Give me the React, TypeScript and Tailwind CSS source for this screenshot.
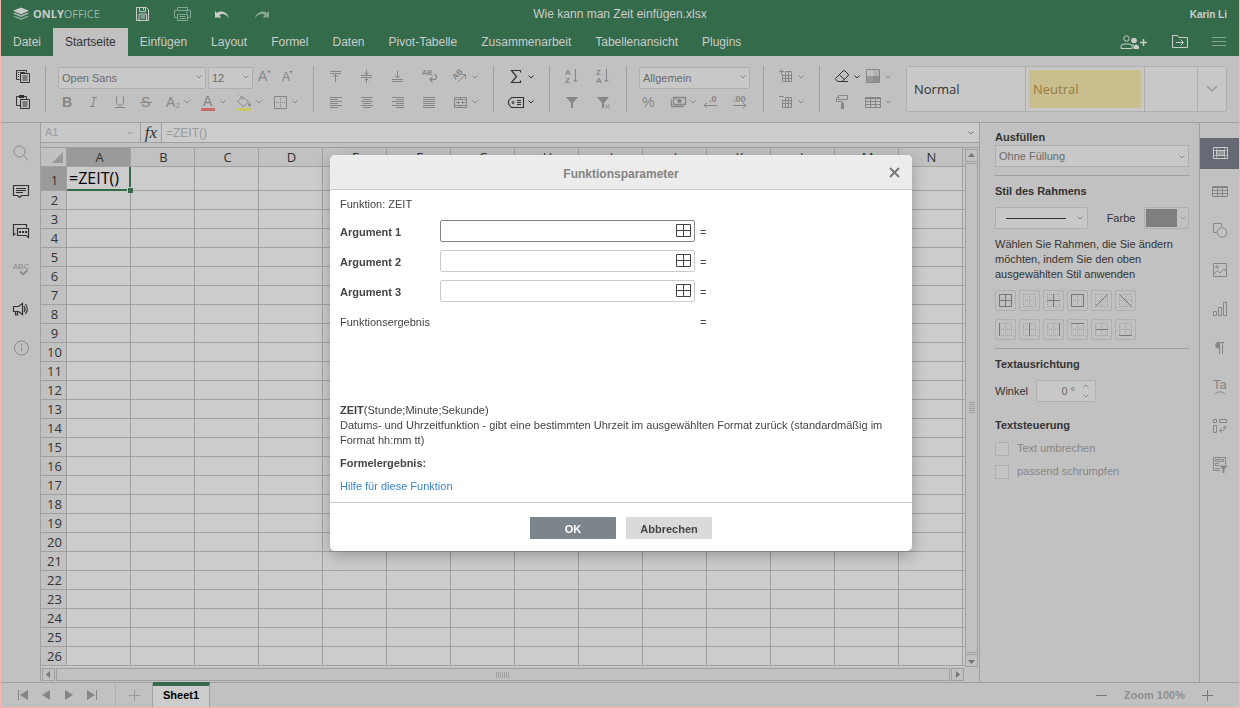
import { useState } from "react";
import type { ReactNode } from "react";
import clsx from "clsx";

const columns = ["A", "B", "C", "D", "E", "F", "G", "H", "I", "J", "K", "L", "M", "N"];
const rows = Array.from({ length: 26 }, (_, i) => i + 1);
const menuTabs = [
  "Datei",
  "Startseite",
  "Einfügen",
  "Layout",
  "Formel",
  "Daten",
  "Pivot-Tabelle",
  "Zusammenarbeit",
  "Tabellenansicht",
  "Plugins",
];

// Base 20x20 icon, stroke follows the text colour
const Icon = ({ children }: { children: ReactNode }) => (
  <svg width="20" height="20" viewBox="0 0 20 20" fill="none" stroke="currentColor" className="block shrink-0">
    {children}
  </svg>
);

const Chevron = () => (
  <svg width="6" height="4" viewBox="0 0 6 4" fill="none" stroke="currentColor" className="block shrink-0">
    <path d="M.5 .5l2.500 2.500l2.500-2.500" />
  </svg>
);

const ToolButton = ({ label, children, caret, dark }: { label: string; children: ReactNode; caret?: boolean; dark?: boolean }) => (
  <div className={clsx("flex h-5 shrink-0 items-center", dark ? "text-[#333333]" : "text-[#868686]")}>
    <button type="button" aria-label={label} className="h-5 w-5">
      <Icon>{children}</Icon>
    </button>
    {caret && (
      <button type="button" aria-label={`${label} Optionen`} className="flex h-5 w-[10px] items-center justify-center">
        <Chevron />
      </button>
    )}
  </div>
);

const ToolGroup = ({ children }: { children: ReactNode }) => <div className="flex shrink-0 flex-col gap-1">{children}</div>;

const Row = ({ children, className }: { children: ReactNode; className?: string }) => (
  <div className={clsx("flex items-center first:h-[22px]", className)}>{children}</div>
);

const Separator = () => <div className="mr-3 ml-[13px] w-px shrink-0 self-stretch bg-[#a0a0a0]" />;

const Combo = ({ label, value, className }: { label: string; value: string; className: string }) => (
  <div className={clsx("relative shrink-0 text-[#868686]", className)}>
    <select
      aria-label={label}
      className="h-[22px] w-full appearance-none rounded-[1px] border border-[#afafaf] bg-[#c8c8c8] pr-4 pl-[3px] text-[11px] text-[#6a6a6a]"
    >
      <option>{value}</option>
    </select>
    <span className="pointer-events-none absolute top-[10px] right-1">
      <Chevron />
    </span>
  </div>
);

const Letter = ({ children, x, y = 15, size = 14, weight }: { children: string; x: number; y?: number; size?: number; weight?: string }) => (
  <text x={x} y={y} fontSize={size} fontWeight={weight} fill="currentColor" stroke="none" fontFamily="Liberation Sans, sans-serif">
    {children}
  </text>
);

const Logo = () => (
  <div className="flex items-center gap-1 text-[#cccccc]">
    <svg width="16" height="14" viewBox="0 0 17 14" fill="currentColor">
      <path d="M8.500 0L17 3.500L8.500 7.200L0 3.500z" />
      <path d="M0 6.500l2-.9l6.500 2.800l6.500-2.800l2 .9l-8.500 3.700z" opacity=".8" />
      <path d="M0 9.700l2-.9l6.500 2.800l6.500-2.800l2 .9l-8.500 3.800z" opacity=".55" />
    </svg>
    <span className="font-['Open_Sans',sans-serif] text-[11px] leading-[14px]">
      <b>ONLY</b>
      <span className="text-[#9cb8a8]">OFFICE</span>
    </span>
  </div>
);

const TitleBar = () => (
  <div className="grid h-7 grid-cols-[1fr_auto_1fr] items-center pr-3 pl-3 text-[#cccccc]">
    <div className="flex items-center">
      <Logo />
      <div className="ml-8 flex gap-[20px]">
        <button type="button" aria-label="Speichern">
          <Icon>
            <path d="M4.500 3.500h10l2 2v11h-12zM7.500 3.500v4h6v-4M11.500 4v2M7 16v-6h7.500v6M8.500 12h4.500M8.500 14h4.500" />
          </Icon>
        </button>
        <button type="button" aria-label="Drucken" className="text-[#84a692]">
          <Icon>
            <path d="M5.500 6.500V3.500h10v3M5.500 13.500h-3v-7h16v7h-3M5.500 10.500h10v6h-10zM7.500 12.500h6M7.500 14.500h6M14 8.500h2" />
          </Icon>
        </button>
        <button type="button" aria-label="Rückgängig">
          <Icon>
            <path d="M3 7v6.500h6.500L7.300 11.300C9.500 9.300 13.500 9.500 17 14C15.500 8 9 5.800 5 9z" fill="currentColor" stroke="none" />
          </Icon>
        </button>
        <button type="button" aria-label="Wiederholen" className="text-[#84a692]">
          <Icon>
            <path d="M17 7v6.500h-6.500l2.200-2.200C10.500 9.300 6.500 9.500 3 14C4.500 8 11 5.800 15 9z" fill="currentColor" stroke="none" />
          </Icon>
        </button>
      </div>
    </div>
    <h1 className="text-[12px]">Wie kann man Zeit einfügen.xlsx</h1>
    <span className="justify-self-end text-[10px] font-bold">Karin Li</span>
  </div>
);

const MenuBar = ({ active, onChange }: { active: string; onChange: (tab: string) => void }) => (
  <nav className="flex h-7 items-stretch text-[12px] text-[#cccccc]">
    {menuTabs.map((tab) => (
      <button
        key={tab}
        type="button"
        onClick={() => onChange(tab)}
        className={clsx("px-3", tab === active && "bg-[#c1c1c1] text-[#333333]")}
      >
        {tab}
      </button>
    ))}
    <div className="ml-auto flex items-center gap-[24px] pr-[13px]">
      <button type="button" aria-label="Benutzer verwalten">
        <svg width="28" height="16" viewBox="0 0 28 16" fill="none" stroke="currentColor" className="block">
          <circle cx="6.500" cy="4.500" r="2.700" />
          <path d="M1 14.500v-2q0-2.500 3-2.500h5q3 0 3 2.500v2z" />
          <path d="M23.500 5v7M20 8.500h7" strokeWidth="1.500" />
          <circle cx="14" cy="6.500" r="2.800" fill="currentColor" stroke="none" />
          <path d="M13.500 15v-2.500l-1.500-2h1.500l1 1l1-1q3.500 0 3.500 2.500v2z" fill="currentColor" stroke="none" />
        </svg>
      </button>
      <button type="button" aria-label="Speicherort öffnen">
        <svg width="16" height="14" viewBox="0 0 16 14" fill="none" stroke="currentColor" className="block">
          <path d="M.5 12.500V.5h5l1.500 2h8.500v10zM4 7.500h7M8.500 4.500l3 3l-3 3" />
        </svg>
      </button>
      <button type="button" aria-label="Ansicht" className="text-[#84a692]">
        <svg width="14" height="10" viewBox="0 0 14 10" stroke="currentColor" className="block">
          <path d="M0 .5h14M0 4.500h14M0 8.500h14" />
        </svg>
      </button>
    </div>
  </nav>
);

const Toolbar = () => (
  <div className="flex border-b border-[#a0a0a0] bg-[#c1c1c1] pt-[10px] pr-3 pb-[10px] pl-[11px]">
    <ToolGroup>
      <Row>
        <ToolButton label="Kopieren" dark>
          <path d="M7.500 12.500h-3v-9h10v2M8.500 6.500h9v9h-9zM10.500 9h5M10.500 11h5M10.500 13h5M6 5.500h1M8 5.500h5M6 7.500h1M6 9.500h1" />
        </ToolButton>
      </Row>
      <Row>
        <ToolButton label="Einfügen" dark>
          <path d="M8.500 13.500h-4v-9h10v3M8.500 7.500h9v9h-9zM10.500 10h5M10.500 12h5M10.500 14h5" />
          <path d="M7 3h5v3H7z" fill="currentColor" stroke="none" />
        </ToolButton>
      </Row>
    </ToolGroup>
    <Separator />
    <ToolGroup>
      <Row>
        <Combo label="Schriftart" value="Open Sans" className="mr-[2px] w-[148px]" />
        <Combo label="Schriftgröße" value="12" className="mr-[5px] w-[45px]" />
        <ToolButton label="Schrift vergrößern">
          <Letter x={0} y={14} size={14}>A</Letter>
          <path d="M9 5.500l2-2.500L13 5.500z" fill="currentColor" stroke="none" />
        </ToolButton>
        <ToolButton label="Schrift verkleinern">
          <Letter x={4} y={14} size={12}>A</Letter>
          <path d="M11 4l2 2.500L15 4z" fill="currentColor" stroke="none" />
        </ToolButton>
      </Row>
      <Row className="gap-[6px]">
        <ToolButton label="Fett">
          <Letter x={4} weight="bold">B</Letter>
        </ToolButton>
        <ToolButton label="Kursiv">
          <path d="M8 5.500h5M6 14.500h5M10.500 5.500l-2 9" />
        </ToolButton>
        <ToolButton label="Unterstrichen">
          <path d="M6.500 4.500v5.500q0 3.500 3.500 3.500t3.500-3.500V4.500M5 15.500h10" />
        </ToolButton>
        <ToolButton label="Durchgestrichen">
          <Letter x={5}>S</Letter>
          <path d="M4 10.500h12" />
        </ToolButton>
        <ToolButton label="Tiefgestellt" caret>
          <Letter x={4}>A</Letter>
          <Letter x={14} y={16} size={7}>2</Letter>
        </ToolButton>
        <ToolButton label="Schriftfarbe" caret>
          <Letter x={5} y={14}>A</Letter>
          <path d="M3 16h14v3H3z" fill="#cc6b6b" stroke="none" />
        </ToolButton>
        <ToolButton label="Hintergrundfarbe" caret>
          <path d="M3.500 9.500l5.500-5l5.500 5.500l-5 4.500zM5.500 3.500l4 4" />
          <path d="M15.500 10l1.500 3.500q-1.500 2-3 0z" fill="currentColor" stroke="none" />
          <path d="M3 16h14v3H3z" fill="#cbc767" stroke="none" />
        </ToolButton>
        <ToolButton label="Rahmen" caret>
          <path d="M4.500 4.500h12v12h-12z" />
          <path d="M6 10.500h9M10.500 6v9" strokeDasharray="1 1" />
        </ToolButton>
      </Row>
    </ToolGroup>
    <Separator />
    <ToolGroup>
      <Row className="gap-[11px]">
        <ToolButton label="Oben ausrichten">
          <path d="M4 4.500h11M4 6.500h11M9.500 8v7M7 10l2.500-2.500L12 10" />
        </ToolButton>
        <ToolButton label="Mittig ausrichten">
          <path d="M4 8.500h11M4 10.500h11M9.500 3v5M7.500 5.500l2 2l2-2M9.500 16v-5M7.500 13.500l2-2l2 2" />
        </ToolButton>
        <ToolButton label="Unten ausrichten">
          <path d="M4 14.500h11M4 12.500h11M9.500 4v7M7 8.500l2.500 2.500L12 8.500" />
        </ToolButton>
        <ToolButton label="Text umbrechen">
          <Letter x={3} y={8} size={7} weight="bold">AB</Letter>
          <path d="M11 12.500h4q2.500 0 2.500-2.500t-2.500-2.500M13.500 10l-2.500 2.500l2.500 2.500" strokeWidth="1.200" />
        </ToolButton>
        <ToolButton label="Ausrichtung" caret>
          <g transform="rotate(-45 8 9)">
            <Letter x={3} y={10} size={8} weight="bold">AB</Letter>
          </g>
          <path d="M8 15l7-7M11.500 7.500H15.500v4" />
        </ToolButton>
      </Row>
      <Row className="gap-[11px]">
        <ToolButton label="Linksbündig">
          <path d="M4 5.500h12M4 7.500h8M4 9.500h12M4 11.500h8M4 13.500h12M4 15.500h8" />
        </ToolButton>
        <ToolButton label="Zentriert">
          <path d="M4 5.500h12M6 7.500h8M4 9.500h12M6 11.500h8M4 13.500h12M6 15.500h8" />
        </ToolButton>
        <ToolButton label="Rechtsbündig">
          <path d="M4 5.500h12M8 7.500h8M4 9.500h12M8 11.500h8M4 13.500h12M8 15.500h8" />
        </ToolButton>
        <ToolButton label="Blocksatz">
          <path d="M4 5.500h12M4 7.500h12M4 9.500h12M4 11.500h12M4 13.500h12M4 15.500h12" />
        </ToolButton>
        <ToolButton label="Zellen verbinden" caret>
          <path d="M4.500 5.500h12v10h-12zM4 7.500h13M4 13.500h13M10.500 5v3M10.500 13v3M6 10.500h3M12 10.500h3M8 9l1.500 1.500L8 12M13 9l-1.500 1.500L13 12" />
        </ToolButton>
      </Row>
    </ToolGroup>
    <Separator />
    <ToolGroup>
      <Row>
        <ToolButton label="Summe" caret dark>
          <path d="M14.500 5.500V3.500h-9l5 6l-5 6h9v-2" strokeWidth="1.200" />
        </ToolButton>
      </Row>
      <Row>
        <ToolButton label="Benannte Bereiche" caret dark>
          <path d="M5.500 5.500h12v10h-12L2.500 12V9zM11 8.500h4M11 10.500h4M11 12.500h4" strokeWidth="1.100" />
          <circle cx="7" cy="10.500" r="1" />
        </ToolButton>
      </Row>
    </ToolGroup>
    <Separator />
    <ToolGroup>
      <Row className="gap-[11px]">
        <ToolButton label="Aufsteigend sortieren">
          <Letter x={3} y={8} size={8} weight="bold">A</Letter>
          <Letter x={3} y={16} size={8} weight="bold">Z</Letter>
          <path d="M13.500 2v13M11 12.500l2.500 2.500l2.500-2.500" />
        </ToolButton>
        <ToolButton label="Absteigend sortieren">
          <Letter x={3} y={8} size={8} weight="bold">Z</Letter>
          <Letter x={3} y={16} size={8} weight="bold">A</Letter>
          <path d="M13.500 2v13M11 12.500l2.500 2.500l2.500-2.500" />
        </ToolButton>
      </Row>
      <Row className="gap-[11px]">
        <ToolButton label="Filter">
          <path d="M4 5h12l-5 6v5H9v-5z" fill="currentColor" stroke="none" />
        </ToolButton>
        <ToolButton label="Filter löschen">
          <path d="M4 5h12l-5 6v5H9v-5z" fill="currentColor" stroke="none" />
          <path d="M12.500 12.500l4 4M16.500 12.500l-4 4" />
        </ToolButton>
      </Row>
    </ToolGroup>
    <Separator />
    <ToolGroup>
      <Row>
        <Combo label="Zahlenformat" value="Allgemein" className="w-[111px]" />
      </Row>
      <Row className="gap-[9px]">
        <ToolButton label="Prozent">
          <Letter x={3}>%</Letter>
        </ToolButton>
        <div className="flex gap-[2px]">
          <ToolButton label="Währung" caret>
            <path d="M5.500 5.500h12v7h-12zM3.500 7.500v7h12" strokeWidth="1.300" />
            <circle cx="11.500" cy="9" r="1.800" fill="currentColor" />
            <path d="M6 6h2v2M17 6v1" />
          </ToolButton>
          <ToolButton label="Dezimalstelle löschen">
            <Letter x={9} y={10} size={9} weight="bold">.0</Letter>
            <path d="M4 13.500h13M7 11l-3 2.500l3 2.500" />
          </ToolButton>
        </div>
        <ToolButton label="Dezimalstelle hinzufügen">
          <Letter x={4} y={10} size={9} weight="bold">.00</Letter>
          <path d="M4 13.500h13M14 11l3 2.500l-3 2.500" />
        </ToolButton>
      </Row>
    </ToolGroup>
    <Separator />
    <ToolGroup>
      <Row>
        <ToolButton label="Zellen einfügen" caret>
          <path d="M6.500 7v7.500h9v-10H9M6 8.500h10M6 11.500h10M9.500 4v11M12.500 4v11M3 4.500h5M5.500 2v5" />
        </ToolButton>
      </Row>
      <Row>
        <ToolButton label="Zellen löschen" caret>
          <path d="M6.500 8v7.500h9v-10H9M6 8.500h10M6 11.500h10M9.500 5v11M12.500 5v11M3 4.500h5" />
        </ToolButton>
      </Row>
    </ToolGroup>
    <Separator />
    <ToolGroup>
      <Row className="gap-px">
        <ToolButton label="Löschen" caret dark>
          <path d="M3.500 11.500l7.500-7.500q1-1 2 0l3 3q1 1 0 2l-6 5.500H6l-2.500-2q-.8-.5 0-1zM7.500 8l5 4.500M10 14.500h6" />
        </ToolButton>
        <ToolButton label="Bedingte Formatierung" caret>
          <path d="M4 9h6v6H4z" fill="#9a9a9a" stroke="none" />
          <path d="M10 9h6v6h-6z" fill="#8e8e8e" stroke="none" />
          <path d="M10 3h6v6h-6z" fill="#b2b2b2" stroke="none" />
          <path d="M3.500 2.500h13v13h-13z" />
        </ToolButton>
      </Row>
      <Row className="gap-[11px]">
        <ToolButton label="Format übertragen">
          <path d="M6.500 3.500h9v4h-9zM6 5.500H4.500v4h6V12" />
          <path d="M9 11h3v6H9z" fill="currentColor" stroke="none" />
        </ToolButton>
        <ToolButton label="Als Tabelle formatieren" caret>
          <path d="M2.500 5.500h15v10h-15zM2 6.500h16M2 9.500h16M2 12.500h16M7.500 6v10M12.500 6v10" />
        </ToolButton>
      </Row>
    </ToolGroup>
    <div className="ml-[13px] flex h-[46px] min-w-0 flex-1 rounded-[2px] border border-[#afafaf] bg-[#c8c8c8] font-['Open_Sans',sans-serif] text-[13px]">
      <button type="button" className="w-[119px] shrink-0 border-r border-[#afafaf] px-[7px] pt-[2px] text-left text-[#333333]">
        Normal
      </button>
      <div className="flex w-[119px] shrink-0 border-r border-[#afafaf] p-[3px]">
        <button type="button" className="flex-1 bg-[#c9be8e] px-1 pt-[2px] text-left text-[#987a43]">
          Neutral
        </button>
      </div>
      <div className="min-w-0 flex-1" />
      <button type="button" aria-label="Weitere Formatvorlagen" className="flex w-[29px] shrink-0 items-center justify-center border-l border-[#afafaf] text-[#9a9a9a]">
        <svg width="12" height="8" viewBox="0 0 12 8" fill="none" stroke="currentColor" strokeWidth="1.500">
          <path d="M1 1l5 5l5-5" />
        </svg>
      </button>
    </div>
  </div>
);

const SideButton = ({ label, children, active, className }: { label: string; children: ReactNode; active?: boolean; className?: string }) => (
  <button
    type="button"
    aria-label={label}
    className={clsx("flex h-[31px] w-full items-start justify-center pt-[5px] pl-px", active && "bg-[#666a75]", className)}
  >
    <Icon>{children}</Icon>
  </button>
);

const LeftBar = () => (
  <aside className="flex w-10 shrink-0 flex-col gap-2 border-r border-[#a0a0a0] bg-[#c1c1c1] pt-[15px] text-[#333333]">
    <SideButton label="Suchen" className="text-[#8a8a8a]">
      <circle cx="8.500" cy="8.500" r="5.500" />
      <path d="M12.500 12.500l5 5" />
    </SideButton>
    <SideButton label="Kommentare">
      <path d="M2.500 3.500h15v10h-7l-2 2l-2-2h-4zM5 6.500h10M5 8.500h10M5 10.500h7" strokeWidth="1.200" />
    </SideButton>
    <SideButton label="Chat">
      <path d="M4.500 12.500l-2 1.500V3.500h13v3M6.500 7.500h11v9l-2.500-2h-8.500z" strokeWidth="1.200" />
      <path d="M8 10h2v2H8zM11 10h2v2h-2zM14 10h2v2h-2z" fill="currentColor" stroke="none" />
    </SideButton>
    <SideButton label="Rechtschreibprüfung" className="text-[#8a8a8a]">
      <Letter x={2} y={9} size={8}>ABC</Letter>
      <path d="M9 11.500l3 3l4.500-4.500" strokeWidth="1.800" />
    </SideButton>
    <SideButton label="Feedback">
      <path d="M2.500 7.500h5l4-3v11l-4-3h-5zM4.500 13v3h2v-3M13 7q2 3 0 6M14.500 5q3.500 5 0 10" strokeWidth="1.200" />
    </SideButton>
    <SideButton label="Info" className="text-[#8a8a8a]">
      <circle cx="10.500" cy="10" r="7" />
      <path d="M10.500 8.500v5M10.500 5.500v1.500" />
    </SideButton>
  </aside>
);

const RightBar = () => (
  <aside className="flex w-10 shrink-0 flex-col gap-2 border-l border-[#a0a0a0] bg-[#c1c1c1] pt-[15px] text-[#868686]">
    <SideButton label="Zelleneinstellungen" active className="text-[#cccccc]">
      <path d="M3.500 4.500h14v11h-14z" />
      <path d="M3 7.500h15M3 12.500h15M6.500 4v12M14.500 4v12" strokeWidth=".6" />
      <path d="M6.500 7.500h8v5h-8z" fill="#96999f" />
    </SideButton>
    <SideButton label="Tabelleneinstellungen">
      <path d="M2.500 4.500h15v10h-15zM2 5.500h16M2 8.500h16M2 11.500h16M7.500 5v10M12.500 5v10" />
    </SideButton>
    <SideButton label="Formeinstellungen">
      <path d="M6.500 11.500h-3v-9h8v3" />
      <circle cx="12" cy="11.500" r="4.800" />
    </SideButton>
    <SideButton label="Bildeinstellungen">
      <path d="M3.500 3.500h13v13h-13zM4 14l3.500-3.500L10 13l4-4l2.500 3" />
      <circle cx="7" cy="7" r="1.200" />
    </SideButton>
    <SideButton label="Diagrammeinstellungen">
      <path d="M3.500 12.500h3v4h-3zM8.500 8.500h3v8h-3zM13.500 3.500h3v13h-3z" />
    </SideButton>
    <SideButton label="Absatzeinstellungen">
      <path d="M10 4h-1.500a3.200 3.200 0 0 0 0 6.500H10z" fill="currentColor" stroke="none" />
      <path d="M9.500 4v12M12.500 4v12M8 4.500h6" />
    </SideButton>
    <SideButton label="TextArt-Einstellungen">
      <Letter x={3} y={12} size={13}>Ta</Letter>
      <path d="M5 17q5-4.500 10 0" />
    </SideButton>
    <SideButton label="Pivot-Einstellungen">
      <path d="M3.500 3.500h3v3h-3zM9.500 3.500h7v3h-7zM3.500 9.500h3v7h-3zM10 14.500h2.500q2.500 0 2.500-4M11.500 12.500l-2 2l2 2M13 12l2-2l2 2" />
    </SideButton>
    <SideButton label="Datenschnitt-Einstellungen">
      <path d="M10 15.500H3.500v-13h12v7M5.500 4.500h8v2h-8zM9 8.500h-3.500v2h3.500M5 13.500h5" />
      <path d="M9 10.500h9l-3.500 3.500v4h-2v-4z" fill="currentColor" stroke="none" />
    </SideButton>
  </aside>
);

const FormulaBar = () => (
  <div className="flex h-5 border-b border-[#a0a0a0] bg-[#c8c8c8] text-[#9a9a9a]">
    <div className="flex w-[100px] shrink-0 items-center border-r border-[#a0a0a0] pr-[7px]">
      <input aria-label="Namensfeld" defaultValue="A1" className="w-full min-w-0 bg-transparent pl-1 text-[11px] outline-none" />
      <Chevron />
    </div>
    <button
      type="button"
      className="w-[21px] shrink-0 border-r border-[#a0a0a0] font-['Liberation_Serif',serif] text-[17px] leading-[18px] text-[#333333] italic"
    >
      fx
    </button>
    <input aria-label="Formel" defaultValue="=ZEIT()" className="min-w-0 flex-1 bg-[#cccccc] pl-1 text-[12px] outline-none" />
    <button type="button" aria-label="Formelleiste erweitern" className="flex w-4 items-center justify-center bg-[#cccccc] text-[#777777]">
      <Chevron />
    </button>
  </div>
);

const Sheet = () => (
  <div className="min-h-0 min-w-0 flex-1 overflow-hidden bg-[#cccccc]">
    <table className="w-full table-fixed border-separate border-spacing-0 font-['Open_Sans',sans-serif] text-[13px] leading-[18px] text-[#333333]">
      <thead>
        <tr className="h-[19px]">
          <th className="w-[26px] border-r border-b border-[#a0a0a0] bg-[#c1c1c1] p-0" aria-label="Alles auswählen">
            <svg width="11" height="11" viewBox="0 0 11 11" className="ml-[11px] block" fill="#9a9a9a">
              <path d="M11 0v11H0z" />
            </svg>
          </th>
          {columns.map((col) => (
            <th
              key={col}
              className={clsx("w-[64px] border-r border-b border-[#a0a0a0] p-0 pl-[2px] font-normal", col === "A" ? "bg-[#9a9a9a]" : "bg-[#c1c1c1]")}
            >
              {col}
            </th>
          ))}
          <td className="border-b border-[#a0a0a0] bg-[#c1c1c1] p-0" />
        </tr>
      </thead>
      <tbody>
        {rows.map((row) => (
          <tr key={row} className={row === 1 ? "h-[24px]" : "h-[19px]"}>
            <th
              className={clsx(
                "border-r border-b border-[#a0a0a0] p-0 pl-[2px] font-normal",
                row === 1 ? "bg-[#9a9a9a] pt-[2px]" : "bg-[#c1c1c1]"
              )}
            >
              {row}
            </th>
            {columns.map((col) =>
              row === 1 && col === "A" ? (
                <td key={col} className="relative border-r-2 border-b-2 border-[#346b4b] p-0 pl-[2px] text-[16px] leading-[22px] text-black">
                  =ZEIT()
                  <span className="absolute -right-[4px] -bottom-[4px] h-[6px] w-[6px] border-t border-l border-[#cccccc] bg-[#346b4b]" />
                </td>
              ) : (
                <td key={col} className="border-r border-b border-[#a0a0a0] p-0" />
              )
            )}
            <td className="border-b border-[#a0a0a0] p-0" />
          </tr>
        ))}
      </tbody>
    </table>
  </div>
);

const ScrollArrow = ({ label, d }: { label: string; d: string }) => (
  <button type="button" aria-label={label} className="h-[13px] w-[13px] shrink-0 border border-[#a0a0a0]">
    <svg width="11" height="11" viewBox="0 0 11 11" fill="#777777" className="block">
      <path d={d} />
    </svg>
  </button>
);

const Workspace = () => (
  <main className="flex min-w-0 flex-1 flex-col bg-[#c1c1c1]">
    <FormulaBar />
    <div className="mt-1 flex min-h-0 flex-1 border-t border-[#a0a0a0]">
      <Sheet />
      <div className="flex w-[14px] shrink-0 flex-col gap-px pt-px">
        <ScrollArrow label="Nach oben" d="M2 7l3.500-4L9 7z" />
        <div className="flex w-[13px] flex-1 items-center justify-center border border-[#a0a0a0]">
          <svg width="6" height="12" viewBox="0 0 6 12" stroke="#a0a0a0">
            <path d="M0 .5h6M0 2.500h6M0 4.500h6M0 6.500h6M0 8.500h6M0 10.500h6" />
          </svg>
        </div>
        <ScrollArrow label="Nach unten" d="M2 5l3.500 4L9 5z" />
      </div>
    </div>
    <div className="flex gap-px pt-px pr-[15px] pb-px pl-px">
      <ScrollArrow label="Nach links" d="M7 2v7L3 5.500z" />
      <div className="flex flex-1 items-center justify-center border border-[#a0a0a0]">
        <svg width="14" height="6" viewBox="0 0 14 6" stroke="#a0a0a0">
          <path d="M.5 0v6M2.500 0v6M4.500 0v6M6.500 0v6M8.500 0v6M10.500 0v6M12.500 0v6" />
        </svg>
      </div>
      <ScrollArrow label="Nach rechts" d="M4 2v7l4-3.500z" />
    </div>
  </main>
);

const grid = "M4.500 4v13M10.500 4v13M16.500 4v13M4 4.500h13M4 10.500h13M4 16.500h13";
const borderIcons = [
  { label: "Alle Rahmenlinien", d: "M4.500 4.500h12v12h-12zM4 10.500h13M10.500 4v13" },
  { label: "Kein Rahmen", d: "" },
  { label: "Innere Linien", d: "M4 10.500h13M10.500 4v13" },
  { label: "Äußere Linien", d: "M4.500 4.500h12v12h-12z" },
  { label: "Diagonale aufwärts", d: "M4.500 16.500l12-12" },
  { label: "Diagonale abwärts", d: "M4.500 4.500l12 12" },
  { label: "Linke Linie", d: "M4.500 4v13" },
  { label: "Innere vertikale Linien", d: "M10.500 4v13" },
  { label: "Rechte Linie", d: "M16.500 4v13" },
  { label: "Obere Linie", d: "M4 4.500h13" },
  { label: "Innere horizontale Linien", d: "M4 10.500h13" },
  { label: "Untere Linie", d: "M4 16.500h13" },
];

const SettingsPanel = () => (
  <section className="w-[220px] shrink-0 border-l border-[#a0a0a0] bg-[#c1c1c1] pt-[7px] pr-[10px] pl-[15px] text-[11px] leading-[15px] text-[#333333]">
    <h2 className="font-bold">Ausfüllen</h2>
    <Combo label="Ausfüllen" value="Ohne Füllung" className="w-full" />
    <hr className="mt-2 border-[#a0a0a0]" />
    <h2 className="mt-2 font-bold">Stil des Rahmens</h2>
    <div className="mt-2 flex items-center justify-between">
      <button
        type="button"
        aria-label="Linienstil"
        className="flex h-[22px] w-[93px] items-center justify-between rounded-[1px] border border-[#afafaf] bg-[#c8c8c8] pr-1 pl-[10px] text-[#868686]"
      >
        <span className="h-px w-[60px] bg-[#333333]" />
        <Chevron />
      </button>
      <span className="ml-[10px]">Farbe</span>
      <button
        type="button"
        aria-label="Farbe"
        className="flex h-[22px] w-[45px] items-center justify-between rounded-[1px] border border-[#afafaf] p-px pr-[2px] text-[#9a9a9a]"
      >
        <span className="h-[18px] w-[31px] bg-[#7f7f7f]" />
        <Chevron />
      </button>
    </div>
    <p className="mt-2">Wählen Sie Rahmen, die Sie ändern möchten, indem Sie den oben ausgewählten Stil anwenden</p>
    <div className="mt-2 grid w-[141px] grid-cols-6 gap-x-[3px] gap-y-2">
      {borderIcons.map(({ label, d }) => (
        <button key={label} type="button" aria-label={label} className="h-[21px] w-[21px] rounded-[2px] border border-[#afafaf] text-[#777777]">
          <svg width="19" height="19" viewBox="1 1 19 19" fill="none" stroke="currentColor" className="block">
            <path d={grid} strokeDasharray="1 1" stroke="#9f9f9f" />
            <path d={d} />
          </svg>
        </button>
      ))}
    </div>
    <hr className="mt-2 border-[#a0a0a0]" />
    <h2 className="mt-2 font-bold">Textausrichtung</h2>
    <div className="mt-2 flex items-center gap-2">
      <label htmlFor="angle">Winkel</label>
      <div className="flex h-[22px] w-[60px] items-center rounded-[1px] border border-[#afafaf] bg-[#c8c8c8] pr-[6px] text-[#868686]">
        <input id="angle" defaultValue="0 °" className="w-full min-w-0 bg-transparent pr-2 text-right text-[#6a6a6a] outline-none" />
        <div className="flex flex-col gap-[6px]">
          <button type="button" aria-label="Winkel erhöhen" className="rotate-180">
            <Chevron />
          </button>
          <button type="button" aria-label="Winkel verringern">
            <Chevron />
          </button>
        </div>
      </div>
    </div>
    <h2 className="mt-4 font-bold">Textsteuerung</h2>
    {["Text umbrechen", "passend schrumpfen"].map((text) => (
      <label key={text} className="mt-2 flex items-center gap-2 text-[#868686]">
        <input type="checkbox" className="h-[14px] w-[14px] appearance-none rounded-[1px] border border-[#afafaf] bg-[#c4c4c4]" />
        {text}
      </label>
    ))}
  </section>
);

const NavArrow = ({ label, d }: { label: string; d: string }) => (
  <button type="button" aria-label={label}>
    <svg width="11" height="10" viewBox="0 0 11 10" fill="#868686" className="block">
      <path d={d} />
    </svg>
  </button>
);

const StatusBar = () => (
  <footer className="flex h-[25px] shrink-0 items-stretch border-t border-[#a0a0a0] bg-[#c1c1c1] text-[11px] font-bold">
    <div className="flex w-[115px] items-center gap-3 border-r border-[#b0b0b0] pl-4">
      <NavArrow label="Erstes Blatt" d="M1 0h1v10H1zM11 0v10L3 5z" />
      <NavArrow label="Vorheriges Blatt" d="M10 0v10L2 5z" />
      <NavArrow label="Nächstes Blatt" d="M2 0v10l8-5z" />
      <NavArrow label="Letztes Blatt" d="M1 0v10l8-5zM10 0h1v10h-1z" />
    </div>
    <button type="button" aria-label="Blatt hinzufügen" className="flex w-[37px] items-center justify-center border-r border-[#a0a0a0] text-[#9a9a9a]">
      <svg width="11" height="11" viewBox="0 0 11 11" stroke="currentColor">
        <path d="M0 5.500h11M5.500 0v11" />
      </svg>
    </button>
    <button type="button" className="-mt-px border-t-4 border-r border-t-[#346b4b] border-r-[#a0a0a0] bg-[#cccccc] px-[10px] pb-[2px] text-black">
      Sheet1
    </button>
    <div className="ml-auto flex items-center gap-[17px] pr-[26px] text-[#8f8f8f]">
      <button type="button" aria-label="Verkleinern">
        <svg width="11" height="11" viewBox="0 0 11 11" stroke="#777777">
          <path d="M0 5.500h11" />
        </svg>
      </button>
      <span>Zoom 100%</span>
      <button type="button" aria-label="Vergrößern">
        <svg width="11" height="11" viewBox="0 0 11 11" stroke="#777777">
          <path d="M0 5.500h11M5.500 0v11" />
        </svg>
      </button>
    </div>
  </footer>
);

const FunctionDialog = () => {
  const [args, setArgs] = useState<string[]>(["", "", ""]);

  const handleArgChange = (index: number, value: string) => {
    setArgs(args.map((arg, i) => (i === index ? value : arg)));
  };

  return (
    <div className="fixed inset-0 flex items-center justify-center pb-0.5 pl-0.5">
      <div
        role="dialog"
        aria-labelledby="dialog-title"
        className="w-[582px] overflow-hidden rounded-[5px] bg-white text-[11px] leading-[15px] text-[#444444] shadow-[0_5px_15px_rgba(0,0,0,0.25)]"
      >
        <header className="flex h-[35px] items-center border-b border-[#cbcbcb] bg-[#ececec] pr-3 pl-[23px]">
          <h2 id="dialog-title" className="flex-1 pt-1 text-center text-[12px] font-bold text-[#848484]">
            Funktionsparameter
          </h2>
          <button type="button" aria-label="Schließen" className="text-[#777777]">
            <svg width="11" height="11" viewBox="0 0 11 11" stroke="currentColor" strokeWidth="2" className="block">
              <path d="M1 1l9 9M10 1l-9 9" />
            </svg>
          </button>
        </header>
        <div className="px-[10px] pt-[7px] pb-2">
          <p>Funktion: ZEIT</p>
          <div className="mt-2 flex flex-col gap-2">
            {args.map((arg, i) => (
              <div key={i} className="flex h-[22px] items-center">
                <label htmlFor={`arg-${i}`} className="w-[100px] pt-[2px] font-bold">
                  Argument {i + 1}
                </label>
                <div className={clsx("flex h-[22px] w-[255px] items-center rounded-[2px] border pr-[3px]", i === 0 ? "border-[#848484]" : "border-[#cbcbcb]")}>
                  <input
                    id={`arg-${i}`}
                    value={arg}
                    onChange={(e) => handleArgChange(i, e.target.value)}
                    className="min-w-0 flex-1 px-1 outline-none"
                  />
                  <button type="button" aria-label="Datenbereich auswählen">
                    <svg width="15" height="14" viewBox="0 0 15 14" fill="none" stroke="#444444" className="block">
                      <path d="M.5 .5h14v12H.5zM0 6.500h15M7.500 0v13" />
                    </svg>
                  </button>
                </div>
                <span className="ml-[5px] pt-[2px]">=</span>
              </div>
            ))}
            <div className="flex h-[22px] items-center pt-[2px]">
              <span className="w-[360px]">Funktionsergebnis</span>
              <span>=</span>
            </div>
          </div>
          <p className="mt-[71px]">
            <b>ZEIT</b>(Stunde;Minute;Sekunde)
          </p>
          <p>Datums- und Uhrzeitfunktion - gibt eine bestimmten Uhrzeit im ausgewählten Format zurück (standardmäßig im Format hh:mm tt)</p>
          <p className="mt-2 font-bold">Formelergebnis:</p>
          <a href="#hilfe" className="mt-2 inline-block text-[#3a85cc]">
            Hilfe für diese Funktion
          </a>
        </div>
        <footer className="flex justify-center gap-[10px] border-t border-[#cbcbcb] pt-[14px] pb-3 font-bold">
          <button type="button" className="h-[22px] w-[86px] rounded-[1px] bg-[#7d858c] pt-[2px] text-white">
            OK
          </button>
          <button type="button" className="h-[22px] w-[86px] rounded-[1px] bg-[#d8dadc] pt-[2px]">
            Abbrechen
          </button>
        </footer>
      </div>
    </div>
  );
};

const App = () => {
  const [activeTab, setActiveTab] = useState("Startseite");

  return (
    <div className="flex h-screen flex-col overflow-hidden border-x border-b border-[#f9b5ab] bg-[#c1c1c1] font-['Liberation_Sans',Arial,sans-serif]">
      <header className="bg-[#346b4b]">
        <TitleBar />
        <MenuBar active={activeTab} onChange={setActiveTab} />
      </header>
      <Toolbar />
      <div className="flex min-h-0 flex-1">
        <LeftBar />
        <Workspace />
        <SettingsPanel />
        <RightBar />
      </div>
      <StatusBar />
      <FunctionDialog />
    </div>
  );
};

export default App;
